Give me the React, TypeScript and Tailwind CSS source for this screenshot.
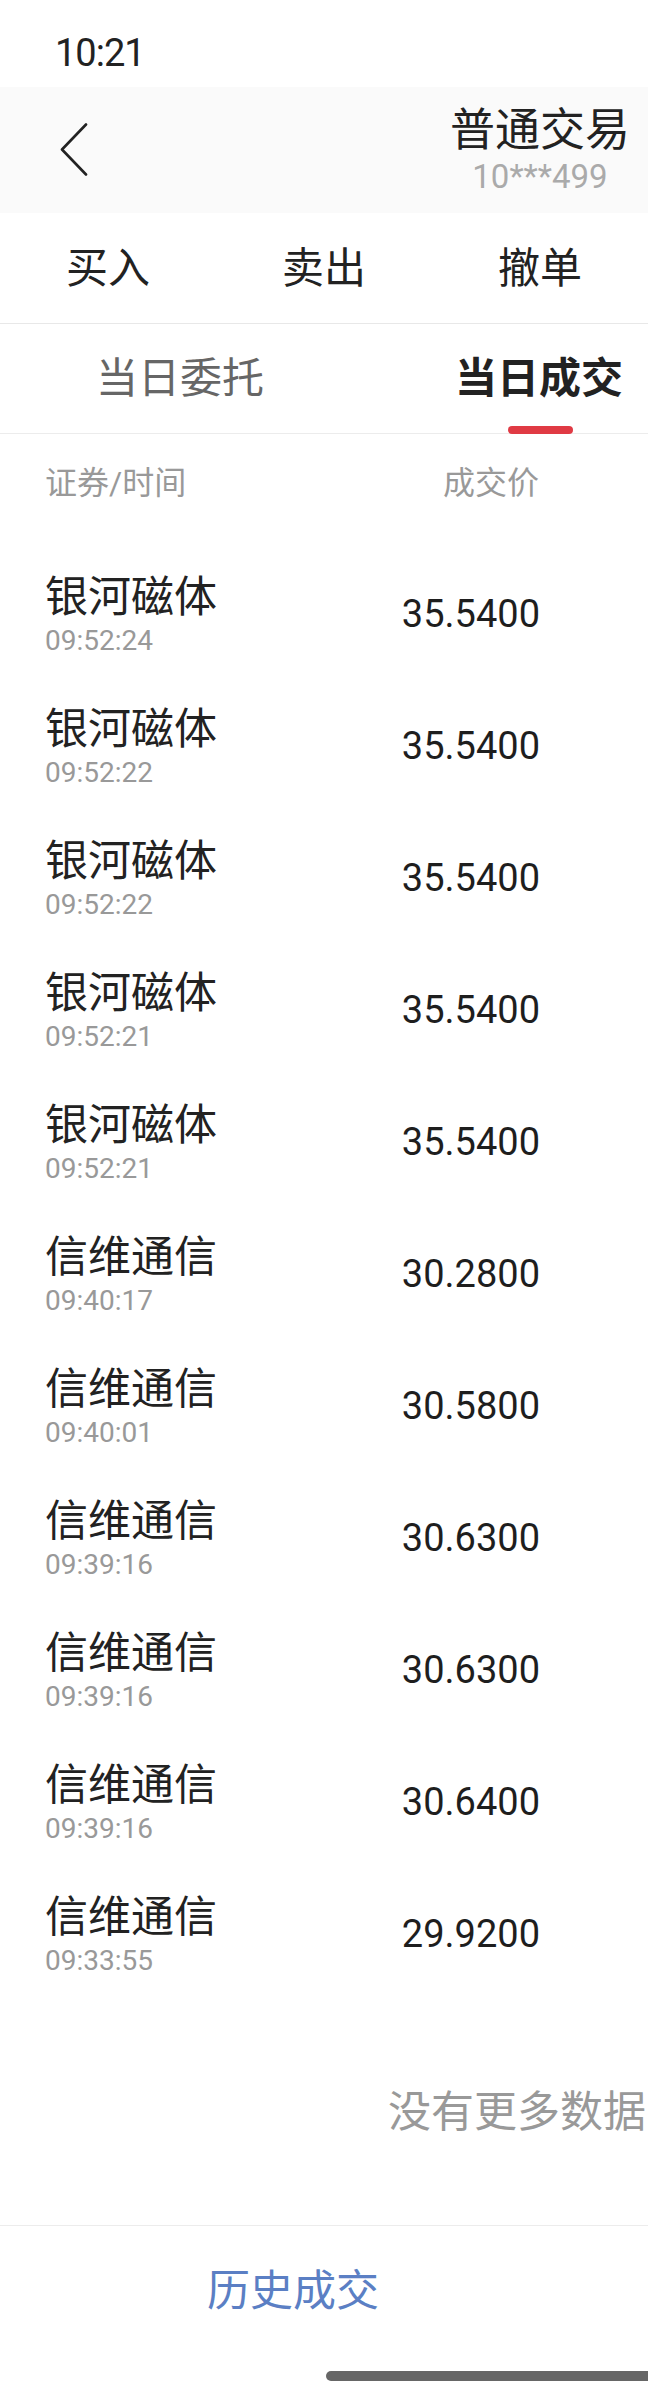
import React from "react";

const trades: { name: string; time: string; price: string }[] = [
  { name: "银河磁体", time: "09:52:24", price: "35.5400" },
  { name: "银河磁体", time: "09:52:22", price: "35.5400" },
  { name: "银河磁体", time: "09:52:22", price: "35.5400" },
  { name: "银河磁体", time: "09:52:21", price: "35.5400" },
  { name: "银河磁体", time: "09:52:21", price: "35.5400" },
  { name: "信维通信", time: "09:40:17", price: "30.2800" },
  { name: "信维通信", time: "09:40:01", price: "30.5800" },
  { name: "信维通信", time: "09:39:16", price: "30.6300" },
  { name: "信维通信", time: "09:39:16", price: "30.6300" },
  { name: "信维通信", time: "09:39:16", price: "30.6400" },
  { name: "信维通信", time: "09:33:55", price: "29.9200" },
];

const TradeRow: React.FC<{ name: string; time: string; price: string }> = ({ name, time, price }) => (
  <div className="flex h-[132px] items-center justify-between pl-[45px] pr-[108px]">
    <div className="flex flex-col">
      <span className="text-[43px] leading-[50px] text-[#222]">{name}</span>
      <span className="mt-[3px] font-['Roboto',sans-serif] text-[28px] leading-[32px] text-[#999]">{time}</span>
    </div>
    <span className="font-['Roboto',sans-serif] text-[38px] leading-[40px] text-[#1e1e1e]">{price}</span>
  </div>
);

const App: React.FC = () => {
  return (
    <div className="relative h-[2399px] w-[648px] overflow-hidden bg-white font-['Roboto','Noto_Sans_CJK_SC',sans-serif]">
      {/* status bar */}
      <div className="flex h-[87px] items-start pl-[55px] pt-[34px]">
        <span className="font-['Roboto',sans-serif] text-[38px] leading-[38px] tracking-[-1px] text-[#222]">10:21</span>
      </div>

      {/* title bar */}
      <div className="flex h-[126px] items-center justify-between bg-[#fafafa] pl-[60px] pr-[18px]">
        <svg width="28" height="54" viewBox="0 0 28 54" fill="none">
          <path d="M26 1.5 L2 26.5 L26 51.5" stroke="#222" strokeWidth="2.6" strokeLinecap="round" strokeLinejoin="round" />
        </svg>
        <div className="flex flex-col items-center">
          <span className="text-[45px] leading-[52px] text-[#222]">普通交易</span>
          <span className="mt-[2px] font-['Roboto',sans-serif] text-[33px] leading-[36px] text-[#aaa]">10***499</span>
        </div>
      </div>

      {/* buy / sell / cancel */}
      <div className="grid h-[111px] grid-cols-3 items-center border-b border-[#e8e8e8] text-center text-[42px] text-[#222]">
        <span>买入</span>
        <span>卖出</span>
        <span>撤单</span>
      </div>

      {/* tabs */}
      <div className="flex h-[110px] border-b border-[#ececec]">
        <div className="flex w-[360px] shrink-0 items-center justify-center text-[42px] text-[#666]">当日委托</div>
        <div className="relative flex w-[360px] shrink-0 items-center justify-start pl-[95px]">
          <span className="text-[42px] font-bold text-[#222]">当日成交</span>
          <span className="absolute bottom-[-1px] left-[148px] h-[8px] w-[65px] rounded-full bg-[#e03a44]" />
        </div>
      </div>

      {/* column header */}
      <div className="flex h-[114px] items-start justify-between pl-[45px] pr-[109px] pt-[30px] text-[32px] leading-[38px] text-[#999]">
        <span>证券/时间</span>
        <span>成交价</span>
      </div>

      {trades.map((t, idx) => (
        <TradeRow key={idx} name={t.name} time={t.time} price={t.price} />
      ))}

      {/* no more */}
      <div className="flex h-[225px] items-center whitespace-nowrap pl-[388px] text-[43px] text-[#999]">
        没有更多数据
      </div>

      {/* footer */}
      <div className="h-[173px] border-t border-[#ececec]">
        <div className="flex h-[130px] items-center pl-[207px] text-[43px] text-[#5b7fc4]">历史成交</div>
        <div className="ml-[326px] mt-[15px] h-[10px] w-[360px] rounded-full bg-[#666]" />
      </div>
    </div>
  );
};

export default App;
